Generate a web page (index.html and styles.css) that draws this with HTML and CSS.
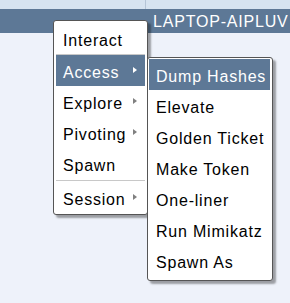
FILE: index.html
```html
<!DOCTYPE html>
<html lang="en">
<head>
    <meta charset="UTF-8">
    <title>Session menu</title>
    <link rel="stylesheet" href="styles.css">
</head>
<body>
    <div class="table">
        <div class="table-head">
            <div class="head-col first"></div>
            <div class="head-col"></div>
        </div>
        <div class="table-row selected">
            <div class="cell first"></div>
            <div class="cell">LAPTOP-AIPLUV</div>
        </div>
    </div>

    <!-- popup menus -->
    <div class="menu main-menu">
        <div class="item first-item">Interact</div>
        <div class="item has-sub active">Access</div>
        <div class="item has-sub">Explore</div>
        <div class="item has-sub">Pivoting</div>
        <div class="item">Spawn</div>
        <div class="separator"></div>
        <div class="item has-sub">Session</div>
    </div>

    <div class="menu sub-menu">
        <div class="item active">Dump Hashes</div>
        <div class="item">Elevate</div>
        <div class="item">Golden Ticket</div>
        <div class="item">Make Token</div>
        <div class="item">One-liner</div>
        <div class="item">Run Mimikatz</div>
        <div class="item">Spawn As</div>
    </div>
</body>
</html>
```

FILE: styles.css
```css
body {
    margin: 0;
    background-color: #eef2fa;
    font-family: "Liberation Sans", Arial, sans-serif;
    font-size: 16px;
    letter-spacing: 0.8px;
    height: 303px;
    overflow: hidden;
}

.table-head {
    display: flex;
    height: 9px;
    background-color: #d6e3f0;
}

.head-col.first {
    width: 145px;
    border-right: 1px solid #b4c4d6;
}

.table-row {
    display: flex;
    height: 24px;
    line-height: 24px;
}

.table-row.selected {
    background-color: #5d7896;
    color: #fff;
}

.cell {
    padding-left: 7px;
    padding-top: 1px;
    white-space: nowrap;
}

.cell.first {
    width: 139px;
}

.menu {
    position: absolute;
    background-color: #fff;
    border: 1px solid #555;
    border-radius: 3px;
    box-shadow: 3px 3px 2px rgba(0, 0, 0, 0.35);
    box-sizing: border-box;
}

.main-menu {
    left: 53px;
    top: 20px;
    width: 95px;
    height: 195px;
    padding: 0 2px;
}

.sub-menu {
    left: 147px;
    top: 57px;
    width: 126px;
    height: 224px;
    padding: 1px 2px 0 1px;
}

.item {
    position: relative;
    height: 31px;
    line-height: 19px;
    padding: 8px 0 0 7px;
    box-sizing: border-box;
    color: #000;
    white-space: nowrap;
}

.main-menu .first-item {
    height: 34px;
    padding-top: 10px;
    border-bottom: 1px solid #c8c8c8;
}

.item.active {
    background-color: #5d7896;
    color: #fff;
}

.has-sub::after {
    content: "";
    position: absolute;
    right: 8px;
    top: 12px;
    border-left: 4px solid #808080;
    border-top: 3.5px solid transparent;
    border-bottom: 3.5px solid transparent;
}

.has-sub.active::after {
    border-left-color: #fff;
}

.separator {
    height: 1px;
    margin: 1px 0;
    background-color: #c8c8c8;
}
```
